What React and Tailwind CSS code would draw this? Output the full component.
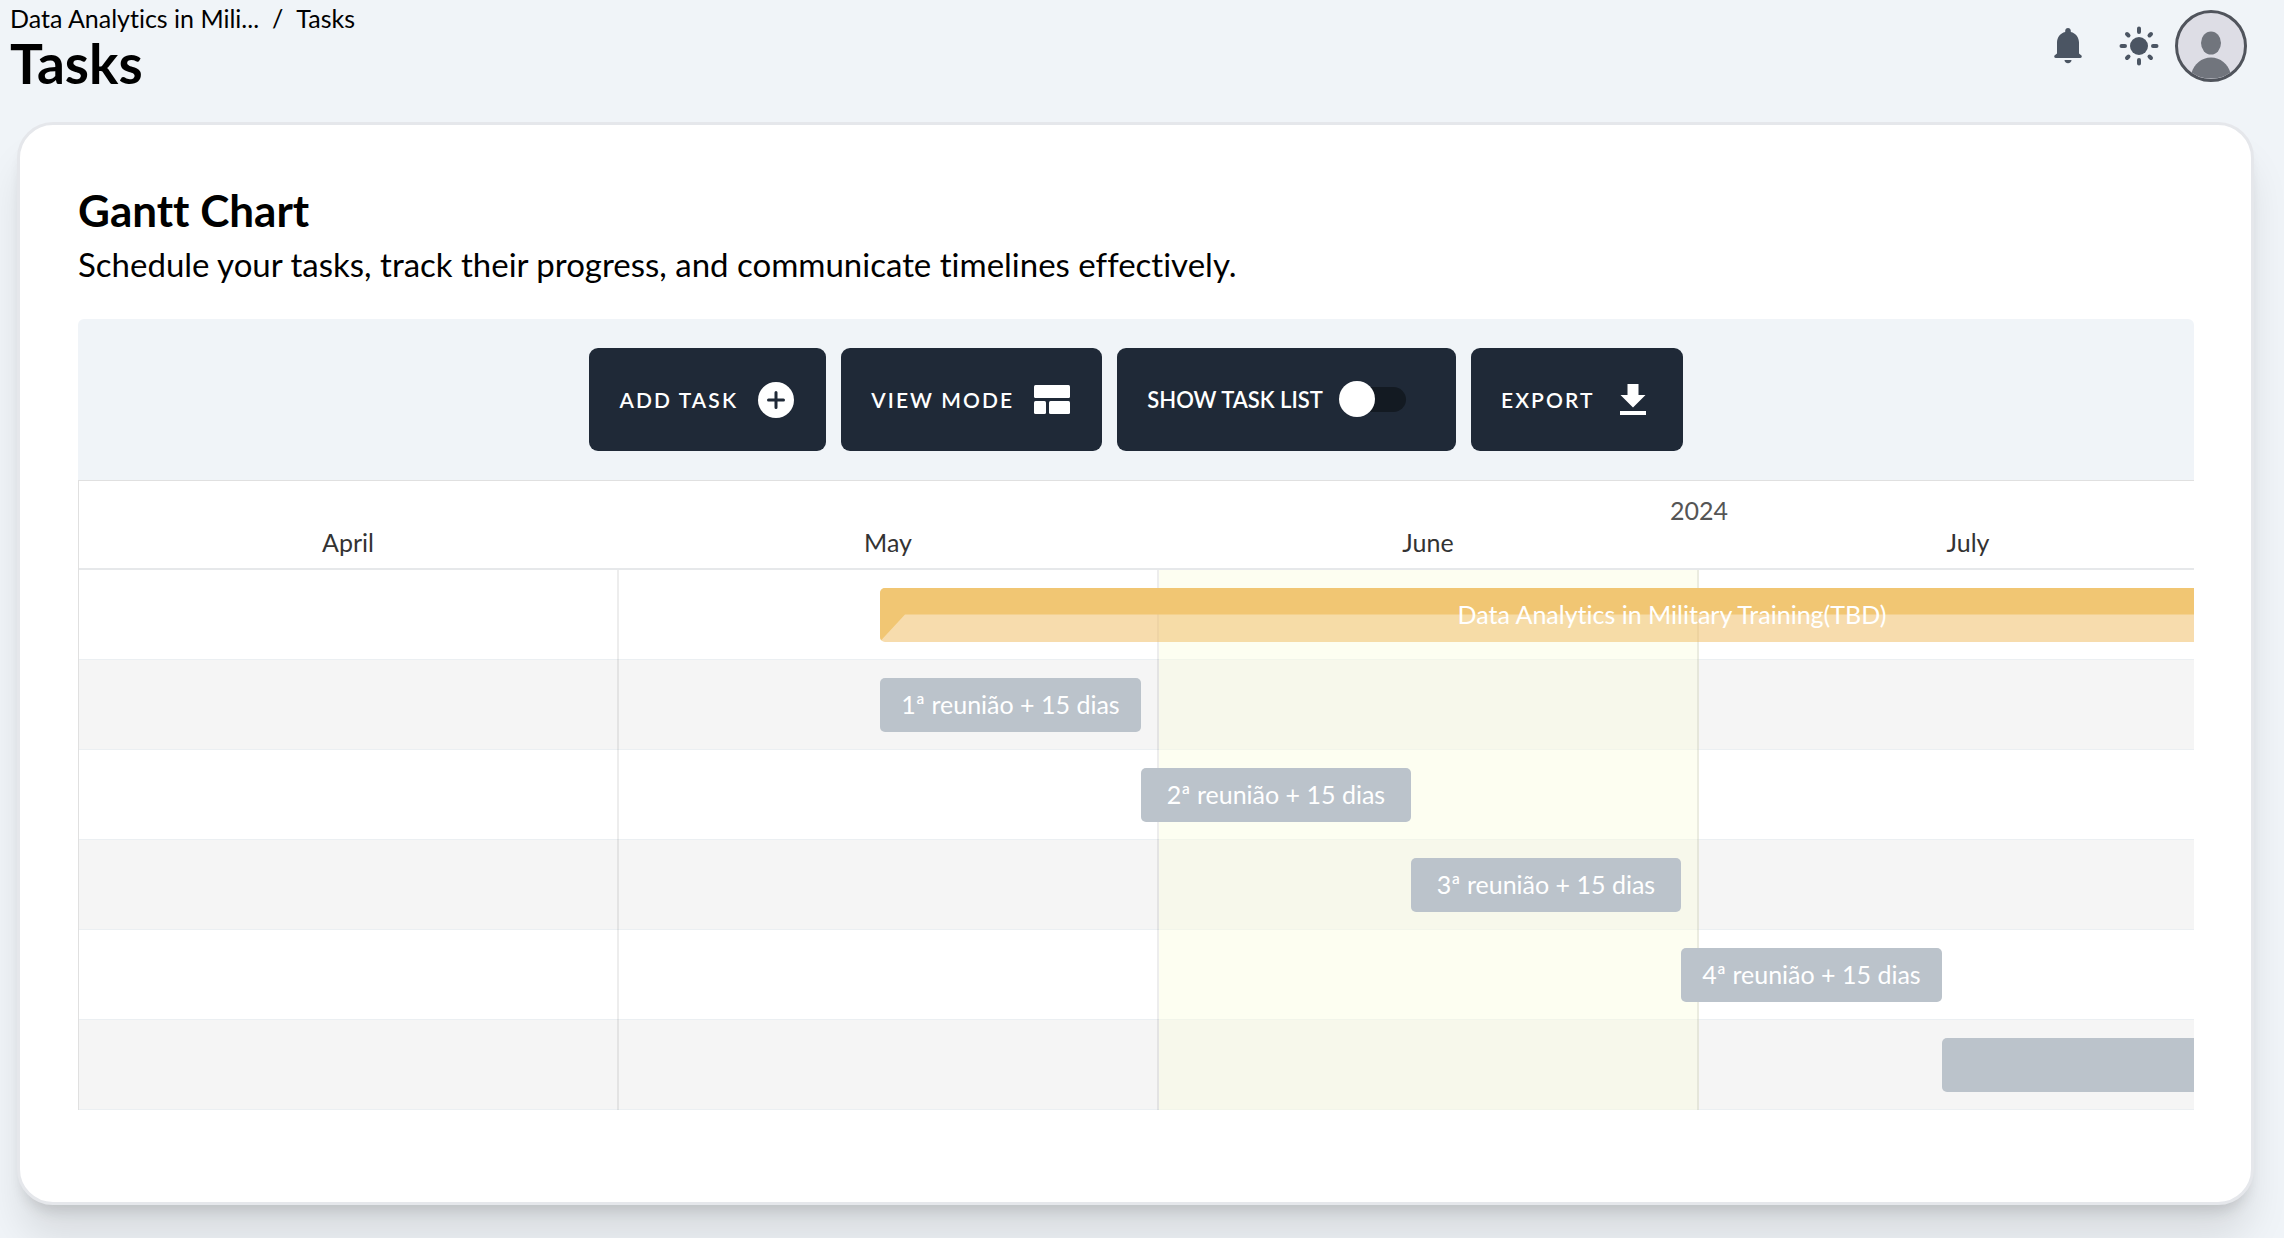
import React, { useState } from "react";

const MONTHS = [
  { name: "April" },
  { name: "May" },
  { name: "June", current: true },
  { name: "July", year: "2024" },
];

// start and length are in pixels of the month scale (540px a month)
const TASKS = [
  {
    id: 1,
    name: "Data Analytics in Military Training(TBD)",
    type: "project",
    start: 801,
    length: 1584,
  },
  { id: 2, name: "1ª reunião + 15 dias", type: "task", start: 801, length: 261 },
  { id: 3, name: "2ª reunião + 15 dias", type: "task", start: 1062, length: 270 },
  { id: 4, name: "3ª reunião + 15 dias", type: "task", start: 1332, length: 270 },
  { id: 5, name: "4ª reunião + 15 dias", type: "task", start: 1602, length: 261 },
  { id: 6, name: "", type: "task", start: 1863, length: 620 },
];

const BellIcon = () => (
  <svg viewBox="0 0 28 36" className="h-9 w-7" fill="currentColor" aria-hidden="true">
    <path d="M14 0c1.600 0 2.800 1.200 2.800 2.800v1.200c5 1.200 8.200 5.400 8.200 10.600V25.500l2.200 1.800c1 .8.700 2.700-.9 2.700H1.700c-1.600 0-1.900-1.900-.9-2.700L3 25.500V14.600C3 9.400 6.200 5.200 11.200 4V2.800C11.200 1.200 12.400 0 14 0z" />
    <path d="M10.500 32h7c0 1.800-1.500 3.200-3.500 3.200s-3.500-1.400-3.500-3.200z" />
  </svg>
);

const SunIcon = () => (
  <svg viewBox="0 0 40 40" className="size-10" aria-hidden="true">
    <circle cx="20" cy="20" r="9" fill="currentColor" />
    <path
      d="M20 2.500v3.500M20 34v3.500M2.500 20H6M34 20h3.500M8 8l1.500 1.500M30.500 30.500l1.500 1.500M8 32l1.500-1.500M30.500 9.500l1.500-1.500"
      stroke="currentColor"
      strokeWidth="4"
      strokeLinecap="round"
    />
  </svg>
);

const AvatarIcon = () => (
  <svg viewBox="0 0 66 66" className="size-full" aria-hidden="true">
    <ellipse cx="33" cy="30" rx="10" ry="11.500" fill="#71757d" />
    <path d="M13.500 60C16 51 23.500 44.500 33 44.500S50 51 52.500 60C47 64 40 65.500 33 65.500S19 64 13.500 60z" fill="#71757d" />
  </svg>
);

const AddIcon = () => (
  <svg viewBox="0 0 36 36" className="size-9" aria-hidden="true">
    <circle cx="18" cy="18" r="18" fill="#fff" />
    <path d="M18 10.500v15M10.500 18h15" stroke="#1f2937" strokeWidth="3" strokeLinecap="round" />
  </svg>
);

const ViewIcon = () => (
  <svg viewBox="0 0 36 30" className="h-[30px] w-9" fill="currentColor" aria-hidden="true">
    <rect width="36" height="13" rx="1.500" />
    <rect y="16" width="12" height="13" rx="1.500" />
    <rect x="15" y="16" width="21" height="13" rx="1.500" />
  </svg>
);

const DownloadIcon = () => (
  <svg viewBox="0 0 36 31" className="h-[31px] w-9" fill="currentColor" aria-hidden="true">
    <path d="M5 27h26v4H5zM12.500 0h11v11h7L18 23.500 5.500 11h7z" />
  </svg>
);

const ToolbarButton = ({ label, children }) => (
  <button
    type="button"
    className="flex h-[103px] items-center gap-5 rounded-[9px] bg-[#1f2937] pl-[30px] pr-8 text-[21px] font-semibold uppercase tracking-widest text-white hover:bg-gray-700"
  >
    {label}
    {children}
  </button>
);

const TaskBar = ({ task }) => {
  const place = { marginLeft: task.start, width: task.length };

  if (task.type === "project") {
    return (
      <div
        style={place}
        className="relative flex h-[54px] shrink-0 items-center justify-center overflow-hidden rounded-[5px] bg-[#f1c06a]/55"
      >
        <div className="absolute inset-0 bg-[#f1c673] [clip-path:polygon(0_0,100%_0,100%_50%,25px_50%,0_100%)]" />
        <span className="relative text-[25px] text-white">{task.name}</span>
      </div>
    );
  }

  return (
    <div
      style={place}
      className="flex h-[54px] shrink-0 items-center justify-center rounded-[5px] bg-[#bbc3cb] text-[25px] text-white"
    >
      {task.name}
    </div>
  );
};

const GanttChart = () => (
  <div className="overflow-hidden border-l border-t border-[#e0e0e0]">
    <div className="w-[2160px]">
      <div className="flex border-b-2 border-[#e6e8ea]">
        {MONTHS.map((month) => (
          <div
            key={month.name}
            className="flex h-[87px] w-[540px] shrink-0 flex-col justify-end pb-2.5 pr-0.5 text-[25px] text-[#333]"
          >
            {month.year && (
              <span className="-ml-10 w-20 text-center leading-8 text-[#555]">{month.year}</span>
            )}
            <span className="text-center leading-8">{month.name}</span>
          </div>
        ))}
      </div>

      <div className="relative">
        {/* month columns, drawn over the row stripes */}
        <div className="absolute inset-0 flex">
          {MONTHS.map((month) => (
            <div
              key={month.name}
              className={
                month.current
                  ? "w-[540px] border-r-2 border-black/7 bg-[#fafde0]/45"
                  : "w-[540px] border-r-2 border-black/7"
              }
            />
          ))}
        </div>
        {TASKS.map((task) => (
          <div
            key={task.id}
            className="flex h-[90px] items-center border-b border-[#ebeff2] even:bg-white odd:bg-[#f5f5f5]"
          >
            <div className="relative flex">
              <TaskBar task={task} />
            </div>
          </div>
        ))}
      </div>
    </div>
  </div>
);

const App = () => {
  const [showList, setShowList] = useState(false);

  return (
    <div className="min-h-screen bg-[#f0f4f8] pb-8 font-['Lato','Liberation_Sans',sans-serif] text-black [font-variant-ligatures:none]">
      <header className="flex items-start justify-between pl-[10px] pr-[37px] pt-[3px]">
        <div>
          <nav aria-label="Breadcrumb" className="flex gap-[13px] text-[25px] leading-[30px]">
            <a href="#project">Data Analytics in Mili...</a>
            <span>/</span>
            <a href="#tasks">Tasks</a>
          </nav>
          <h1 className="text-[55px] font-bold leading-[60px]">Tasks</h1>
        </div>
        <div className="flex items-center pt-[7px] text-[#4b5563]">
          <button type="button" aria-label="Notifications" className="mr-[37px]">
            <BellIcon />
          </button>
          <button type="button" aria-label="Toggle theme" className="mr-4">
            <SunIcon />
          </button>
          <button
            type="button"
            aria-label="Account"
            className="size-[72px] overflow-hidden rounded-full border-3 border-[#50545c] bg-[#dddde5]"
          >
            <AvatarIcon />
          </button>
        </div>
      </header>

      <main className="ml-[17px] mr-[30px] mt-[29px] rounded-[36px] border-3 border-gray-200 bg-white pb-[92px] pl-[58px] pr-[57px] pt-[61px] shadow-[0_36px_40px_-4px_rgb(0_0_0/0.10),0_12px_14px_-6px_rgb(0_0_0/0.12)]">
        <h2 className="text-[44px] font-bold leading-[48px]">Gantt Chart</h2>
        <p className="mt-2.5 text-[33px] leading-[40px]">
          Schedule your tasks, track their progress, and communicate timelines effectively.
        </p>

        <div className="mt-[35px] flex justify-center gap-[15px] rounded-t-md bg-[#f0f4f8] py-[29px]">
          <ToolbarButton label="Add task">
            <AddIcon />
          </ToolbarButton>
          <ToolbarButton label="View mode">
            <ViewIcon />
          </ToolbarButton>
          <label className="flex h-[103px] cursor-pointer items-center gap-4 rounded-[9px] bg-[#1f2937] pl-[30px] pr-[50px] text-[22px] font-semibold uppercase text-white">
            Show task list
            <input
              type="checkbox"
              role="switch"
              checked={showList}
              onChange={(e) => setShowList(e.target.checked)}
              className="relative h-[25px] w-[67px] cursor-pointer appearance-none rounded-full bg-[#131a22] before:absolute before:-top-[6px] before:left-0 before:size-9 before:rounded-full before:bg-white before:transition-all checked:before:left-[31px]"
            />
          </label>
          <ToolbarButton label="Export">
            <DownloadIcon />
          </ToolbarButton>
        </div>

        <GanttChart />
      </main>
    </div>
  );
};

export default App;
